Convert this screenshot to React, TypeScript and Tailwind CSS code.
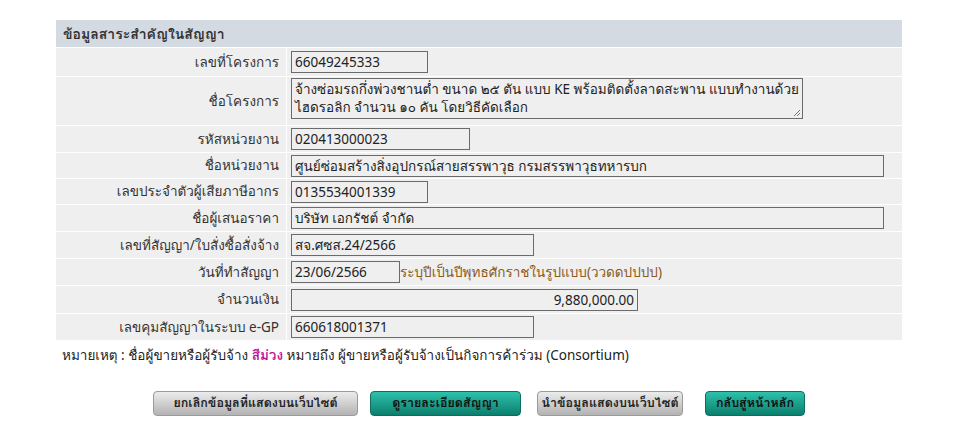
import React from "react";

function Row({ label, h, children }: { label: string; h: string; children: React.ReactNode }) {
  return (
    <tr className={`${h} bg-[#efefef]`}>
      <td className="w-[230px] pr-[7px] text-right align-middle text-[#333]">{label}</td>
      <td className="pl-[4px] align-middle">{children}</td>
    </tr>
  );
}

function Box({ w, children, right }: { w: string; children: React.ReactNode; right?: boolean }) {
  return (
    <div
      className={`${w} h-[22px] border border-[#6b6b6b] bg-[#efefef] px-[3px] leading-[20px] text-[#222] ${right ? "text-right" : ""}`}
    >
      {children}
    </div>
  );
}

const grey =
  "h-[25px] whitespace-nowrap px-0 rounded-[4px] border border-[#9a9a9a] bg-gradient-to-b from-[#ececec] to-[#b3b3b3] text-[12.5px] font-bold text-[#222]";
const teal =
  "h-[25px] whitespace-nowrap px-0 rounded-[4px] border border-[#0c6e60] bg-gradient-to-b from-[#2cc2ac] to-[#0c7f6e] text-[12.5px] font-bold text-[#111]";

export default function App() {
  return (
    <div className="w-[958px] h-[433px] bg-white pt-[20px] font-['Noto_Sans',Loma,sans-serif] text-[13.5px]">
      <table className="ml-[55px] w-[848px] border-separate border-spacing-[1px] -mt-[1px]">
        <tbody>
          <tr className="h-[27px] bg-[#d3dae2]">
            <td colSpan={2} className="pl-[7px] text-[14px] font-bold text-[#333]">ข้อมูลสาระสำคัญในสัญญา</td>
          </tr>
          <Row label="เลขที่โครงการ" h="h-[28px]">
            <Box w="w-[137px]">66049245333</Box>
          </Row>
          <tr className="h-[48px] bg-[#efefef]">
            <td className="w-[230px] pr-[7px] text-right align-middle text-[#333]">ชื่อโครงการ</td>
            <td className="pl-[4px] align-top pt-[1px]">
              <div className="relative w-[512px] h-[41px] border border-[#6b6b6b] bg-[#efefef] px-[3px] pt-[1px] leading-[18px] text-[#222]">
                จ้างซ่อมรถกึ่งพ่วงชานต่ำ ขนาด ๒๕ ตัน แบบ KE พร้อมติดตั้งลาดสะพาน แบบทำงานด้วย
                <br />
                ไฮดรอลิก จำนวน ๑๐ คัน โดยวิธีคัดเลือก
                <svg className="absolute right-[1px] bottom-[1px]" width="9" height="9" viewBox="0 0 9 9">
                  <path d="M8 2 L2 8 M8 5 L5 8" stroke="#777" strokeWidth="1" />
                </svg>
              </div>
            </td>
          </tr>
          <Row label="รหัสหน่วยงาน" h="h-[26px]">
            <Box w="w-[179px]">020413000023</Box>
          </Row>
          <Row label="ชื่อหน่วยงาน" h="h-[25px]">
            <Box w="w-[593px]">ศูนย์ซ่อมสร้างสิ่งอุปกรณ์สายสรรพาวุธ กรมสรรพาวุธทหารบก</Box>
          </Row>
          <Row label="เลขประจำตัวผู้เสียภาษีอากร" h="h-[25px]">
            <Box w="w-[137px]">0135534001339</Box>
          </Row>
          <Row label="ชื่อผู้เสนอราคา" h="h-[26px]">
            <Box w="w-[593px]">บริษัท เอกรัชต์ จำกัด</Box>
          </Row>
          <Row label="เลขที่สัญญา/ใบสั่งซื้อสั่งจ้าง" h="h-[26px]">
            <Box w="w-[243px]">สจ.ศซส.24/2566</Box>
          </Row>
          <Row label="วันที่ทำสัญญา" h="h-[26px]">
            <div className="flex items-center">
              <Box w="w-[109px]">23/06/2566</Box>
              <span className="text-[#8a5a1e]">ระบุปีเป็นปีพุทธศักราชในรูปแบบ(ววดดปปปป)</span>
            </div>
          </Row>
          <Row label="จำนวนเงิน" h="h-[27px]">
            <Box w="w-[347px]" right>9,880,000.00</Box>
          </Row>
          <Row label="เลขคุมสัญญาในระบบ e-GP" h="h-[26px]">
            <Box w="w-[243px]">660618001371</Box>
          </Row>
        </tbody>
      </table>
      <p className="ml-[62px] mt-[4px] text-[#222]">
        หมายเหตุ : ชื่อผู้ขายหรือผู้รับจ้าง <span className="font-bold text-[#c0139a]">สีม่วง</span> หมายถึง ผู้ขายหรือผู้รับจ้างเป็นกิจการค้าร่วม (Consortium)
      </p>
      <div className="mt-[26px] flex items-center">
        <button className={`ml-[153px] w-[205px] ${grey}`}>ยกเลิกข้อมูลที่แสดงบนเว็บไซต์</button>
        <button className={`ml-[12px] w-[151px] ${teal}`}>ดูรายละเอียดสัญญา</button>
        <button className={`ml-[16px] w-[146px] ${grey}`}>นำข้อมูลแสดงบนเว็บไซต์</button>
        <button className={`ml-[22px] w-[100px] ${teal}`}>กลับสู่หน้าหลัก</button>
      </div>
    </div>
  );
}
